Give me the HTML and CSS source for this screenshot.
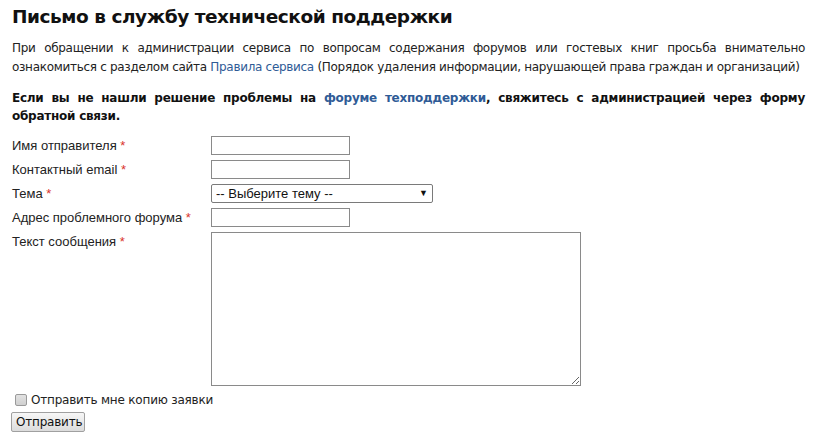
FILE: index.html
```html
<!DOCTYPE html>
<html lang="ru">
<head>
<meta charset="utf-8">
<title>Письмо в службу технической поддержки</title>
<link rel="stylesheet" href="styles.css">
</head>
<body>
<div class="page">
  <h1 class="title">Письмо в службу технической поддержки</h1>
  <p class="intro"><span class="intro-first">При обращении к администрации сервиса по вопросам содержания форумов или гостевых книг просьба внимательно</span> ознакомиться с разделом сайта <a class="link" href="#">Правила сервиса</a> (Порядок удаления информации, нарушающей права граждан и организаций)</p>
  <p class="notice">Если вы не нашли решение проблемы на <a class="link" href="#">форуме техподдержки</a>, свяжитесь с администрацией через форму обратной связи.</p>
  <form class="form">
    <div class="row">
      <label class="label">Имя отправителя <span class="req">*</span></label>
      <input class="field" type="text">
    </div>
    <div class="row">
      <label class="label">Контактный email <span class="req">*</span></label>
      <input class="field" type="text">
    </div>
    <div class="row">
      <label class="label">Тема <span class="req">*</span></label>
      <div class="select-wrap">
        <select class="select"><option>-- Выберите тему --</option></select>
        <span class="arrow">▼</span>
      </div>
    </div>
    <div class="row">
      <label class="label">Адрес проблемного форума <span class="req">*</span></label>
      <input class="field" type="text">
    </div>
    <div class="row">
      <label class="label">Текст сообщения <span class="req">*</span></label>
      <textarea class="textarea"></textarea>
    </div>
    <label class="copy"><input class="check" type="checkbox">Отправить мне копию заявки</label>
    <button class="submit" type="button">Отправить</button>
  </form>
</div>
</body>
</html>
```
FILE: styles.css
```css
html, body {
  margin: 0;
  padding: 0;
  background: #fff;
}
.page {
  padding: 5px 18px 0 12px;
  font-family: "DejaVu Sans", Verdana, sans-serif;
  color: #222;
}
.title {
  margin: 0 0 10px 0;
  font-size: 18.5px;
  line-height: 24px;
  font-weight: bold;
  letter-spacing: -0.45px;
  color: #111;
}
.intro {
  margin: 0 0 12px 0;
  font-size: 12px;
  line-height: 19px;
  letter-spacing: -0.3px;
  text-align: justify;
}
.intro-first {
  display: block;
  text-align: justify;
  text-align-last: justify;
}
.notice {
  margin: 0 0 11px 0;
  font-size: 12px;
  line-height: 18px;
  font-weight: bold;
  letter-spacing: -0.25px;
  text-align: justify;
  color: #111;
}
.link {
  color: #2f5b96;
  text-decoration: none;
}
.form {
  display: flex;
  flex-direction: column;
  font-family: "Liberation Sans", Arial, sans-serif;
  font-size: 13px;
  color: #222;
}
.row {
  display: grid;
  grid-template-columns: 199px auto;
  align-items: start;
  margin-bottom: 5px;
}
.label {
  padding-top: 1px;
  line-height: 17px;
}
.req {
  color: #d9342b;
}
.field {
  box-sizing: border-box;
  width: 139px;
  height: 19px;
  margin: 0;
  border: 1px solid #8a8a8a;
  padding: 1px 3px;
  font: 13px "Liberation Sans", Arial, sans-serif;
  justify-self: start;
}
.select-wrap {
  position: relative;
  width: 222px;
  height: 19px;
}
.select {
  appearance: none;
  -webkit-appearance: none;
  box-sizing: border-box;
  width: 222px;
  height: 19px;
  margin: 0;
  padding: 0 4px;
  border: 1px solid #7a7a7a;
  border-radius: 2px;
  background: #fff;
  font: 13px "Liberation Sans", Arial, sans-serif;
  color: #111;
}
.arrow {
  position: absolute;
  right: 5px;
  top: 3px;
  font-size: 9px;
  line-height: 12px;
  color: #111;
  pointer-events: none;
}
.textarea {
  box-sizing: border-box;
  width: 370px;
  height: 154px;
  margin: 0;
  border: 1px solid #8a8a8a;
  padding: 2px;
  font: 13px "Liberation Sans", Arial, sans-serif;
  justify-self: start;
}
.copy {
  display: flex;
  align-items: center;
  margin-top: 0;
  font-family: "DejaVu Sans", Verdana, sans-serif;
  font-size: 12px;
  letter-spacing: -0.2px;
  line-height: 18px;
  color: #222;
}
.check {
  appearance: none;
  -webkit-appearance: none;
  box-sizing: border-box;
  margin: 0 4px 0 3px;
  width: 12px;
  height: 12px;
  border: 1px solid #9a9a9a;
  border-radius: 2px;
  background: linear-gradient(#e2e2e2, #d0d0d0);
}
.submit {
  align-self: flex-start;
  box-sizing: border-box;
  width: 74px;
  height: 20px;
  margin: 3px 0 0 -1px;
  padding: 0 4px;
  border: 1px solid #a0a0a0;
  border-radius: 2px;
  background: linear-gradient(#f7f7f7, #dcdcdc);
  font-family: "DejaVu Sans", Verdana, sans-serif;
  font-size: 12px;
  letter-spacing: -0.2px;
  color: #111;
}
```
